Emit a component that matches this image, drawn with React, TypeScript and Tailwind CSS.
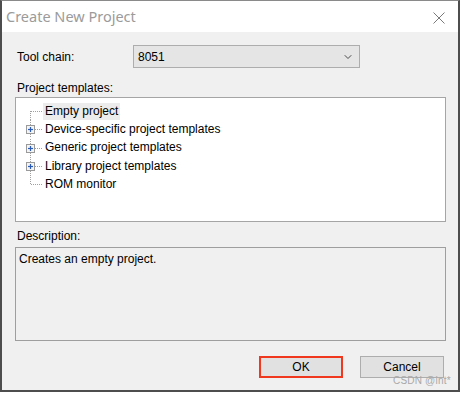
import { ChevronDown } from 'lucide-react'

const font = { fontFamily: '"Liberation Sans", Arial, sans-serif' }

type Row = { label: string; expandable: boolean; selected?: boolean }

const rows: Row[] = [
  { label: 'Empty project', expandable: false, selected: true },
  { label: 'Device-specific project templates', expandable: true },
  { label: 'Generic project templates', expandable: true },
  { label: 'Library project templates', expandable: true },
  { label: 'ROM monitor', expandable: false },
]

function TreeGlyph({ first, last, expandable }: { first: boolean; last: boolean; expandable: boolean }) {
  return (
    <svg width="27" height="18" className="shrink-0">
      <line x1="14.5" y1={first ? 9 : 0} x2="14.5" y2={last ? 9.5 : 18} stroke="#a0a0a0" strokeDasharray="1 1" />
      <line x1="15" y1="9.5" x2="27" y2="9.5" stroke="#a0a0a0" strokeDasharray="1 1" />
      {expandable && (
        <g>
          <rect x="10.5" y="5.5" width="8" height="8" fill="#f4f4f4" stroke="#9a9a9a" />
          <line x1="12" y1="9.5" x2="17" y2="9.5" stroke="#2a5bb8" strokeWidth="1.2" />
          <line x1="14.5" y1="7" x2="14.5" y2="12" stroke="#2a5bb8" strokeWidth="1.2" />
        </g>
      )}
    </svg>
  )
}

export default function App() {
  return (
    <div className="w-[461px] h-[394px] bg-white relative" style={font}>
      <div className="w-[460px] h-[392px] flex flex-col border-2 border-t border-[#4d4d4d] border-t-[#8a8a8a] bg-[#f0f0f0]">
        {/* title bar */}
        <div className="h-[31px] bg-white flex items-center justify-between pl-[4px] pr-[13px] shrink-0">
          <span className="text-[14.5px] text-[#9b9b9b] mt-[1px]" style={{ fontFamily: '"Noto Sans", sans-serif' }}>
            Create New Project
          </span>
          <svg width="12" height="12" className="mt-[2px]">
            <path d="M0.5 0.5 L11.5 11.5 M11.5 0.5 L0.5 11.5" stroke="#7a7a7a" strokeWidth="1" />
          </svg>
        </div>

        <div className="flex flex-col pl-[13px] text-[12px] text-black">
          <div className="flex items-center mt-[13px] h-[23px]">
            <span className="w-[118px] pl-[2px]">Tool chain:</span>
            <div className="w-[227px] h-[23px] bg-[#e5e5e5] border border-[#adadad] flex items-center justify-between pl-[4px] pr-[5px]">
              <span>8051</span>
              <ChevronDown size={12} strokeWidth={2} className="text-[#4a4a4a]" />
            </div>
          </div>

          <div className="mt-[13px] h-[14px] leading-[14px] pl-[2px]">Project templates:</div>

          <div className="mt-[2px] w-[431px] h-[125px] bg-white border border-[#a5a5a5] pt-[4px]">
            {rows.map((row, i) => (
              <div key={row.label} className="flex items-center h-[18.3px]">
                <TreeGlyph first={i === 0} last={i === rows.length - 1} expandable={row.expandable} />
                <span className={row.selected ? 'bg-[#ececec] px-[2px] leading-[17px]' : 'px-[2px] leading-[17px]'}>
                  {row.label}
                </span>
              </div>
            ))}
          </div>

          <div className="mt-[7px] h-[14px] leading-[14px] pl-[2px]">Description:</div>

          <div className="mt-[4px] w-[431px] h-[94px] border border-[#9e9e9e] px-[3px] pt-[2px]">
            Creates an empty project.
          </div>

          <div className="flex justify-end gap-[17px] mt-[15px] w-[429px]">
            <button className="w-[84px] h-[22px] bg-[#e1e1e1] border-2 border-[#f0381f] text-[12px]">OK</button>
            <button className="w-[84px] h-[22px] bg-[#e1e1e1] border border-[#adadad] text-[12px]">Cancel</button>
          </div>
        </div>
      </div>
      <span className="absolute left-[393px] top-[373px] text-[10px] text-[#a8a8a8] tracking-[0.2px]">CSDN @int*</span>
    </div>
  )
}
